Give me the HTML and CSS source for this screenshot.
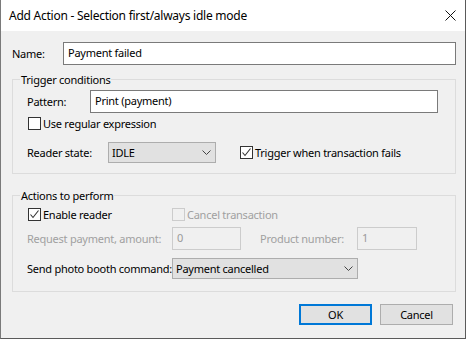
FILE: index.html
```html
<!DOCTYPE html>
<html>
<head>
<meta charset="utf-8">
<link rel="stylesheet" href="styles.css">
</head>
<body>
<div class="window">
  <div class="titlebar">
    <span class="title">Add Action - Selection first/always idle mode</span>
    <svg class="close" width="11" height="11" viewBox="0 0 11 11"><path d="M0.5 0.5 L10.5 10.5 M10.5 0.5 L0.5 10.5" stroke="#111" stroke-width="1" fill="none"/></svg>
  </div>
  <div class="content">
    <div class="row name-row">
      <span class="lbl name-lbl">Name:</span>
      <div class="input name-input">Payment failed</div>
    </div>

    <div class="group g1">
      <div class="group-title">Trigger conditions</div>
      <div class="row pattern-row">
        <span class="lbl pattern-lbl">Pattern:</span>
        <div class="input pattern-input">Print (payment)</div>
      </div>
      <div class="check-row regex-row">
        <span class="cb"></span><span class="cb-text">Use regular expression</span>
      </div>
      <div class="row reader-row">
        <span class="lbl reader-lbl">Reader state:</span>
        <div class="select reader-select"><span>IDLE</span>
          <svg class="chev" width="9" height="5" viewBox="0 0 9 5"><path d="M0.5 0.5 L4.5 4.5 L8.5 0.5" stroke="#444" fill="none"/></svg>
        </div>
        <div class="check-row trigger-check">
          <span class="cb checked"><svg width="11" height="11" viewBox="0 0 11 11"><path d="M1.5 5.5 L4 8.5 L9.5 1.5" stroke="#333" stroke-width="1.1" fill="none"/></svg></span><span class="cb-text">Trigger when transaction fails</span>
        </div>
      </div>
    </div>

    <div class="group g2">
      <div class="group-title">Actions to perform</div>
      <div class="row checks-row">
        <div class="check-row enable-check">
          <span class="cb checked"><svg width="11" height="11" viewBox="0 0 11 11"><path d="M1.5 5.5 L4 8.5 L9.5 1.5" stroke="#333" stroke-width="1.1" fill="none"/></svg></span><span class="cb-text">Enable reader</span>
        </div>
        <div class="check-row disabled">
          <span class="cb"></span><span class="cb-text">Cancel transaction</span>
        </div>
      </div>
      <div class="row request-row">
        <span class="lbl disabled request-lbl">Request payment, amount:</span>
        <div class="input disabled amount-input">0</div>
        <span class="lbl disabled product-lbl">Product number:</span>
        <div class="input disabled product-input">1</div>
      </div>
      <div class="row send-row">
        <span class="lbl send-lbl">Send photo booth command:</span>
        <div class="select send-select"><span>Payment cancelled</span>
          <svg class="chev" width="9" height="5" viewBox="0 0 9 5"><path d="M0.5 0.5 L4.5 4.5 L8.5 0.5" stroke="#444" fill="none"/></svg>
        </div>
      </div>
    </div>

    <div class="buttons">
      <div class="btn default">OK</div>
      <div class="btn">Cancel</div>
    </div>
  </div>
</div>
</body>
</html>
```

FILE: styles.css
```css
* { box-sizing: border-box; }
html, body { margin: 0; padding: 0; }
body {
  font-family: "Noto Sans", "Open Sans", sans-serif;
  font-size: 11px;
  letter-spacing: -0.25px;
  color: #000;
  background: #f0f0f0;
}
.window {
  width: 466px;
  height: 339px;
  background: #f0f0f0;
  border-left: 1px solid #7a7a7a;
  border-right: 1px solid #5a5a5a;
  border-bottom: 1px solid #5a5a5a;
  display: flex;
  flex-direction: column;
}
.titlebar {
  height: 31px;
  background: #fff;
  display: flex;
  align-items: center;
  justify-content: space-between;
  padding: 0 9px 0 8px;
}
.title {
  font-size: 12px;
  letter-spacing: -0.25px;
  color: #000;
}
.close { display: block; }
.content {
  padding: 11px 9px 0 11px;
  display: flex;
  flex-direction: column;
}
.row {
  display: flex;
  align-items: center;
}
.lbl {
  line-height: 16px;
  white-space: nowrap;
}
.disabled, .lbl.disabled { color: #a0a0a0; }
.input {
  height: 23px;
  border: 1px solid #7a7a7a;
  background: #fff;
  padding: 0 4px;
  line-height: 19px;
  white-space: nowrap;
}
.input.disabled {
  border-color: #cccccc;
  background: #f0f0f0;
  color: #9a9a9a;
}
.select {
  height: 21px;
  border: 1px solid #adadad;
  background: #e1e1e1;
  display: flex;
  align-items: center;
  justify-content: space-between;
  padding: 0 4px 0 3px;
}
.chev { display: block; }
.name-row { height: 23px; }
.name-lbl { width: 51px; }
.name-input { flex: 1; }

.group {
  border: 1px solid #dcdcdc;
  padding: 0 0 0 14px;
}
.group-title {
  margin-top: -8px;
  margin-left: -7px;
  padding: 0 1px;
  line-height: 16px;
  height: 16px;
  background: #f0f0f0;
  width: fit-content;
}
.g1 { margin-top: 14px; padding-bottom: 10px; }
.g2 { margin-top: 21px; padding-bottom: 12px; }

.pattern-row { margin-top: 2px; height: 23px; }
.pattern-lbl { width: 63px; }
.pattern-input { width: 348px; }

.check-row {
  display: flex;
  align-items: center;
  height: 13px;
  white-space: nowrap;
}
.cb {
  width: 13px;
  height: 13px;
  border: 1px solid #333;
  background: #fff;
  flex: none;
  display: flex;
  align-items: center;
  justify-content: center;
}
.cb svg { display: block; }
.cb-text {
  margin-left: 2px;
  line-height: 16px;
}
.disabled .cb {
  border-color: #cccccc;
  background: #f0f0f0;
}
.regex-row { margin-top: 4px; margin-left: 1px; }

.reader-row { margin-top: 12px; height: 21px; }
.reader-lbl { width: 81px; }
.reader-select { width: 108px; }
.trigger-check { margin-left: 24px; }

.checks-row { margin-top: 4px; height: 13px; }
.enable-check { width: 144px; margin-left: 1px; }

.request-row { margin-top: 6px; height: 23px; }
.request-lbl { width: 145px; }
.amount-input { width: 69px; }
.product-lbl { margin-left: 19px; width: 97px; }
.product-input { width: 60px; }

.send-row { margin-top: 8px; height: 21px; }
.send-lbl { width: 145px; }
.send-select { width: 186px; }

.buttons {
  margin-top: 12px;
  display: flex;
  justify-content: flex-end;
  gap: 8px;
  padding-right: 3px;
}
.btn {
  width: 73px;
  height: 21px;
  border: 1px solid #adadad;
  background: #e1e1e1;
  display: flex;
  align-items: center;
  justify-content: center;
  line-height: 16px;
}
.btn.default {
  border: 2px solid #0078d7;
}
```
